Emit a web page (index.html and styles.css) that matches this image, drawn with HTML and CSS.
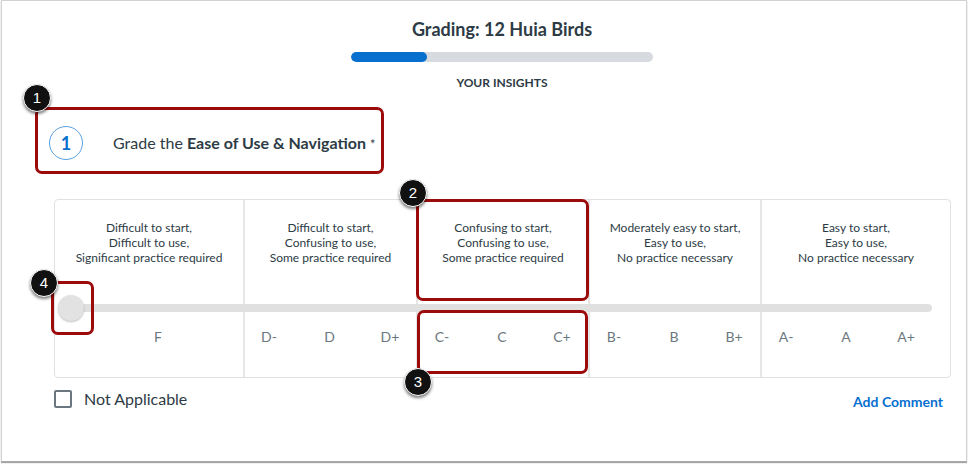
FILE: index.html
```html
<!DOCTYPE html>
<html>
<head>
<meta charset="utf-8">
<link rel="stylesheet" href="styles.css">
</head>
<body>
<div class="frame">
  <h1 class="title">Grading: 12 Huia Birds</h1>
  <div class="progress"><div class="progress-fill" style="width:25%"></div></div>
  <div class="section">YOUR INSIGHTS</div>

  <div class="question">
    <div class="qnum">1</div>
    <div class="qtext">Grade the <b>Ease of Use &amp; Navigation</b> <span class="req">*</span></div>
  </div>

  <div class="scale">
    <div class="desc c1">Difficult to start,<br>Difficult to use,<br>Significant practice required</div>
    <div class="desc">Difficult to start,<br>Confusing to use,<br>Some practice required</div>
    <div class="desc">Confusing to start,<br>Confusing to use,<br>Some practice required</div>
    <div class="desc">Moderately easy to start,<br>Easy to use,<br>No practice necessary</div>
    <div class="desc">Easy to start,<br>Easy to use,<br>No practice necessary</div>

    <div class="track-row">
      <div class="track"></div>
      <div class="thumb"></div>
    </div>

    <div class="grades g1"><span>F</span></div>
    <div class="grades"><span>D-</span><span>D</span><span>D+</span></div>
    <div class="grades"><span>C-</span><span>C</span><span>C+</span></div>
    <div class="grades"><span>B-</span><span>B</span><span>B+</span></div>
    <div class="grades g5"><span>A-</span><span>A</span><span>A+</span></div>
  </div>

  <div class="footer">
    <label class="na"><span class="box"></span>Not Applicable</label>
    <a class="comment">Add Comment</a>
  </div>
</div>

<div class="anno box-1"></div>
<div class="anno box-2"></div>
<div class="anno box-3"></div>
<div class="anno box-4"></div>
<div class="badge b-1">1</div>
<div class="badge b-2">2</div>
<div class="badge b-3">3</div>
<div class="badge b-4">4</div>
</body>
</html>
```

FILE: styles.css
```css
* { box-sizing: border-box; }
html, body { margin: 0; padding: 0; background: #ffffff; }
body {
  position: relative;
  width: 969px;
  height: 464px;
  overflow: hidden;
  font-family: Lato, "Open Sans", sans-serif;
  color: #2d3b45;
}
.frame {
  margin-left: 1px;
  width: 966px;
  height: 462px;
  border: 1px solid #d2d2d2;
  border-bottom-color: #a8a8a8;
  box-shadow: 0 1px 1px rgba(0,0,0,0.35);
  background: #fff;
  padding-top: 17px;
}
.title {
  margin: 0;
  text-align: center;
  font-size: 18px;
  line-height: 22px;
  font-weight: 700;
  padding-left: 36px;
}
.progress {
  margin: 12px 0 0 349px;
  width: 302px;
  height: 10px;
  border-radius: 5px;
  background: #d7dade;
  overflow: hidden;
}
.progress-fill {
  height: 100%;
  background: #0770cf;
  border-radius: 5px;
}
.section {
  margin-top: 14px;
  text-align: center;
  font-size: 12px;
  line-height: 14px;
  font-weight: 700;
  padding-left: 36px;
}
.question {
  display: flex;
  align-items: center;
  margin: 36px 0 0 47px;
  height: 34px;
}
.qnum {
  width: 34px;
  height: 34px;
  border-radius: 50%;
  border: 1.5px solid #5aa0e0;
  color: #0770cf;
  font-weight: 700;
  font-size: 18px;
  display: flex;
  align-items: center;
  justify-content: center;
}
.qtext {
  margin-left: 30px;
  font-size: 16px;
  line-height: 20px;
  padding-top: 1px;
}
.qtext b { font-weight: 700; }
.req { font-size: 13px; }

.scale {
  margin: 39px 0 0 52px;
  width: 897px;
  height: 179px;
  border: 1px solid #e1e1e1;
  border-radius: 4px;
  display: grid;
  grid-template-columns: 188px 173px 172px 172px minmax(0, 1fr);
  grid-template-rows: 104px 8px 1fr;
}
.desc {
  min-width: 0;
  text-align: center;
  font-size: 12px;
  line-height: 15px;
  padding-top: 20px;
  border-left: 2px solid #e6e6e6;
}
.desc.c1 { border-left: none; }
.track-row {
  grid-column: 1 / -1;
  position: relative;
  padding: 0 18px 0 3px;
}
.track {
  height: 8px;
  border-radius: 4px;
  background: #e0e0e0;
}
.thumb {
  position: absolute;
  left: 3px;
  top: -9px;
  width: 26px;
  height: 26px;
  border-radius: 50%;
  background: #e2e2e2;
  box-shadow: 0 1px 2px rgba(0,0,0,0.25);
}
.grades {
  min-width: 0;
  display: flex;
  justify-content: space-between;
  align-items: flex-start;
  border-left: 2px solid #e6e6e6;
  padding: 15px 6px 0 4px;
  font-size: 14px;
  line-height: 20px;
  color: #6b7780;
}
.grades span {
  width: 40px;
  text-align: center;
}
.grades.g1 {
  border-left: none;
  justify-content: center;
  padding: 15px 0 0 18px;
}
.grades.g5 { padding-right: 24px; }

.footer {
  display: flex;
  justify-content: space-between;
  align-items: flex-start;
  margin: 9px 0 0 52px;
  width: 889px;
}
.na {
  display: flex;
  align-items: center;
  margin-top: 2px;
  font-size: 16px;
  line-height: 20px;
}
.box {
  width: 18px;
  height: 18px;
  border: 2px solid #6b7780;
  border-radius: 2px;
  margin-right: 12px;
}
.comment {
  font-size: 14px;
  line-height: 17px;
  font-weight: 700;
  color: #0770cf;
  padding-top: 6px;
}

.anno {
  position: absolute;
  border: 3px solid #9b0b0b;
  border-radius: 7px;
}
.box-1 { left: 35px; top: 107px; width: 349px; height: 67px; }
.box-2 { left: 416px; top: 199px; width: 173px; height: 102px; }
.box-3 { left: 417px; top: 310px; width: 171px; height: 64px; }
.box-4 { left: 51px; top: 281px; width: 43px; height: 54px; }

.badge {
  position: absolute;
  width: 28px;
  height: 28px;
  border-radius: 50%;
  background: #111;
  border: 1px solid #fff;
  box-shadow: 0 2px 3px rgba(0,0,0,0.5);
  color: #fff;
  font-family: "Liberation Sans", Arial, sans-serif;
  font-size: 15px;
  line-height: 26px;
  text-align: center;
}
.b-1 { left: 23px; top: 84px; }
.b-2 { left: 399px; top: 179px; }
.b-3 { left: 404px; top: 368px; }
.b-4 { left: 30px; top: 269px; }
```
